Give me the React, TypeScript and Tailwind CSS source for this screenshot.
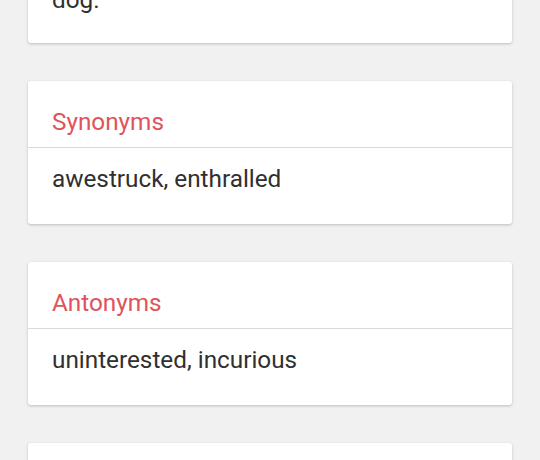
import React from "react";

function Card({ title, body }: { title: string; body: string }) {
  return (
    <div className="bg-white rounded-[3px] shadow-[0_1px_3px_rgba(0,0,0,0.22)]">
      <div className="px-[24px] pt-[25px] pb-[9px] text-[24.3px] leading-[32px] text-[#e2525a]">{title}</div>
      <div className="h-px bg-[#dadada]" />
      <div className="px-[24px] pt-[15px] pb-[29px] text-[24.3px] leading-[32px] text-[#303030]">{body}</div>
    </div>
  );
}

export default function App() {
  return (
    <div
      className="w-[540px] h-[460px] overflow-hidden bg-[#f1f1f1]"
      style={{ fontFamily: "Roboto, 'Noto Sans', sans-serif" }}
    >
      <div className="mx-[28px] mt-[-33px] flex flex-col gap-[38px]">
        <div className="bg-white rounded-[3px] shadow-[0_1px_3px_rgba(0,0,0,0.22)]">
          <div className="px-[24px] pt-[17px] pb-[27px] text-[24.3px] leading-[32px] text-[#303030]">dog.</div>
        </div>
        <Card title="Synonyms" body="awestruck, enthralled" />
        <Card title="Antonyms" body="uninterested, incurious" />
        <Card title="Rhymes" body="" />
      </div>
    </div>
  );
}
